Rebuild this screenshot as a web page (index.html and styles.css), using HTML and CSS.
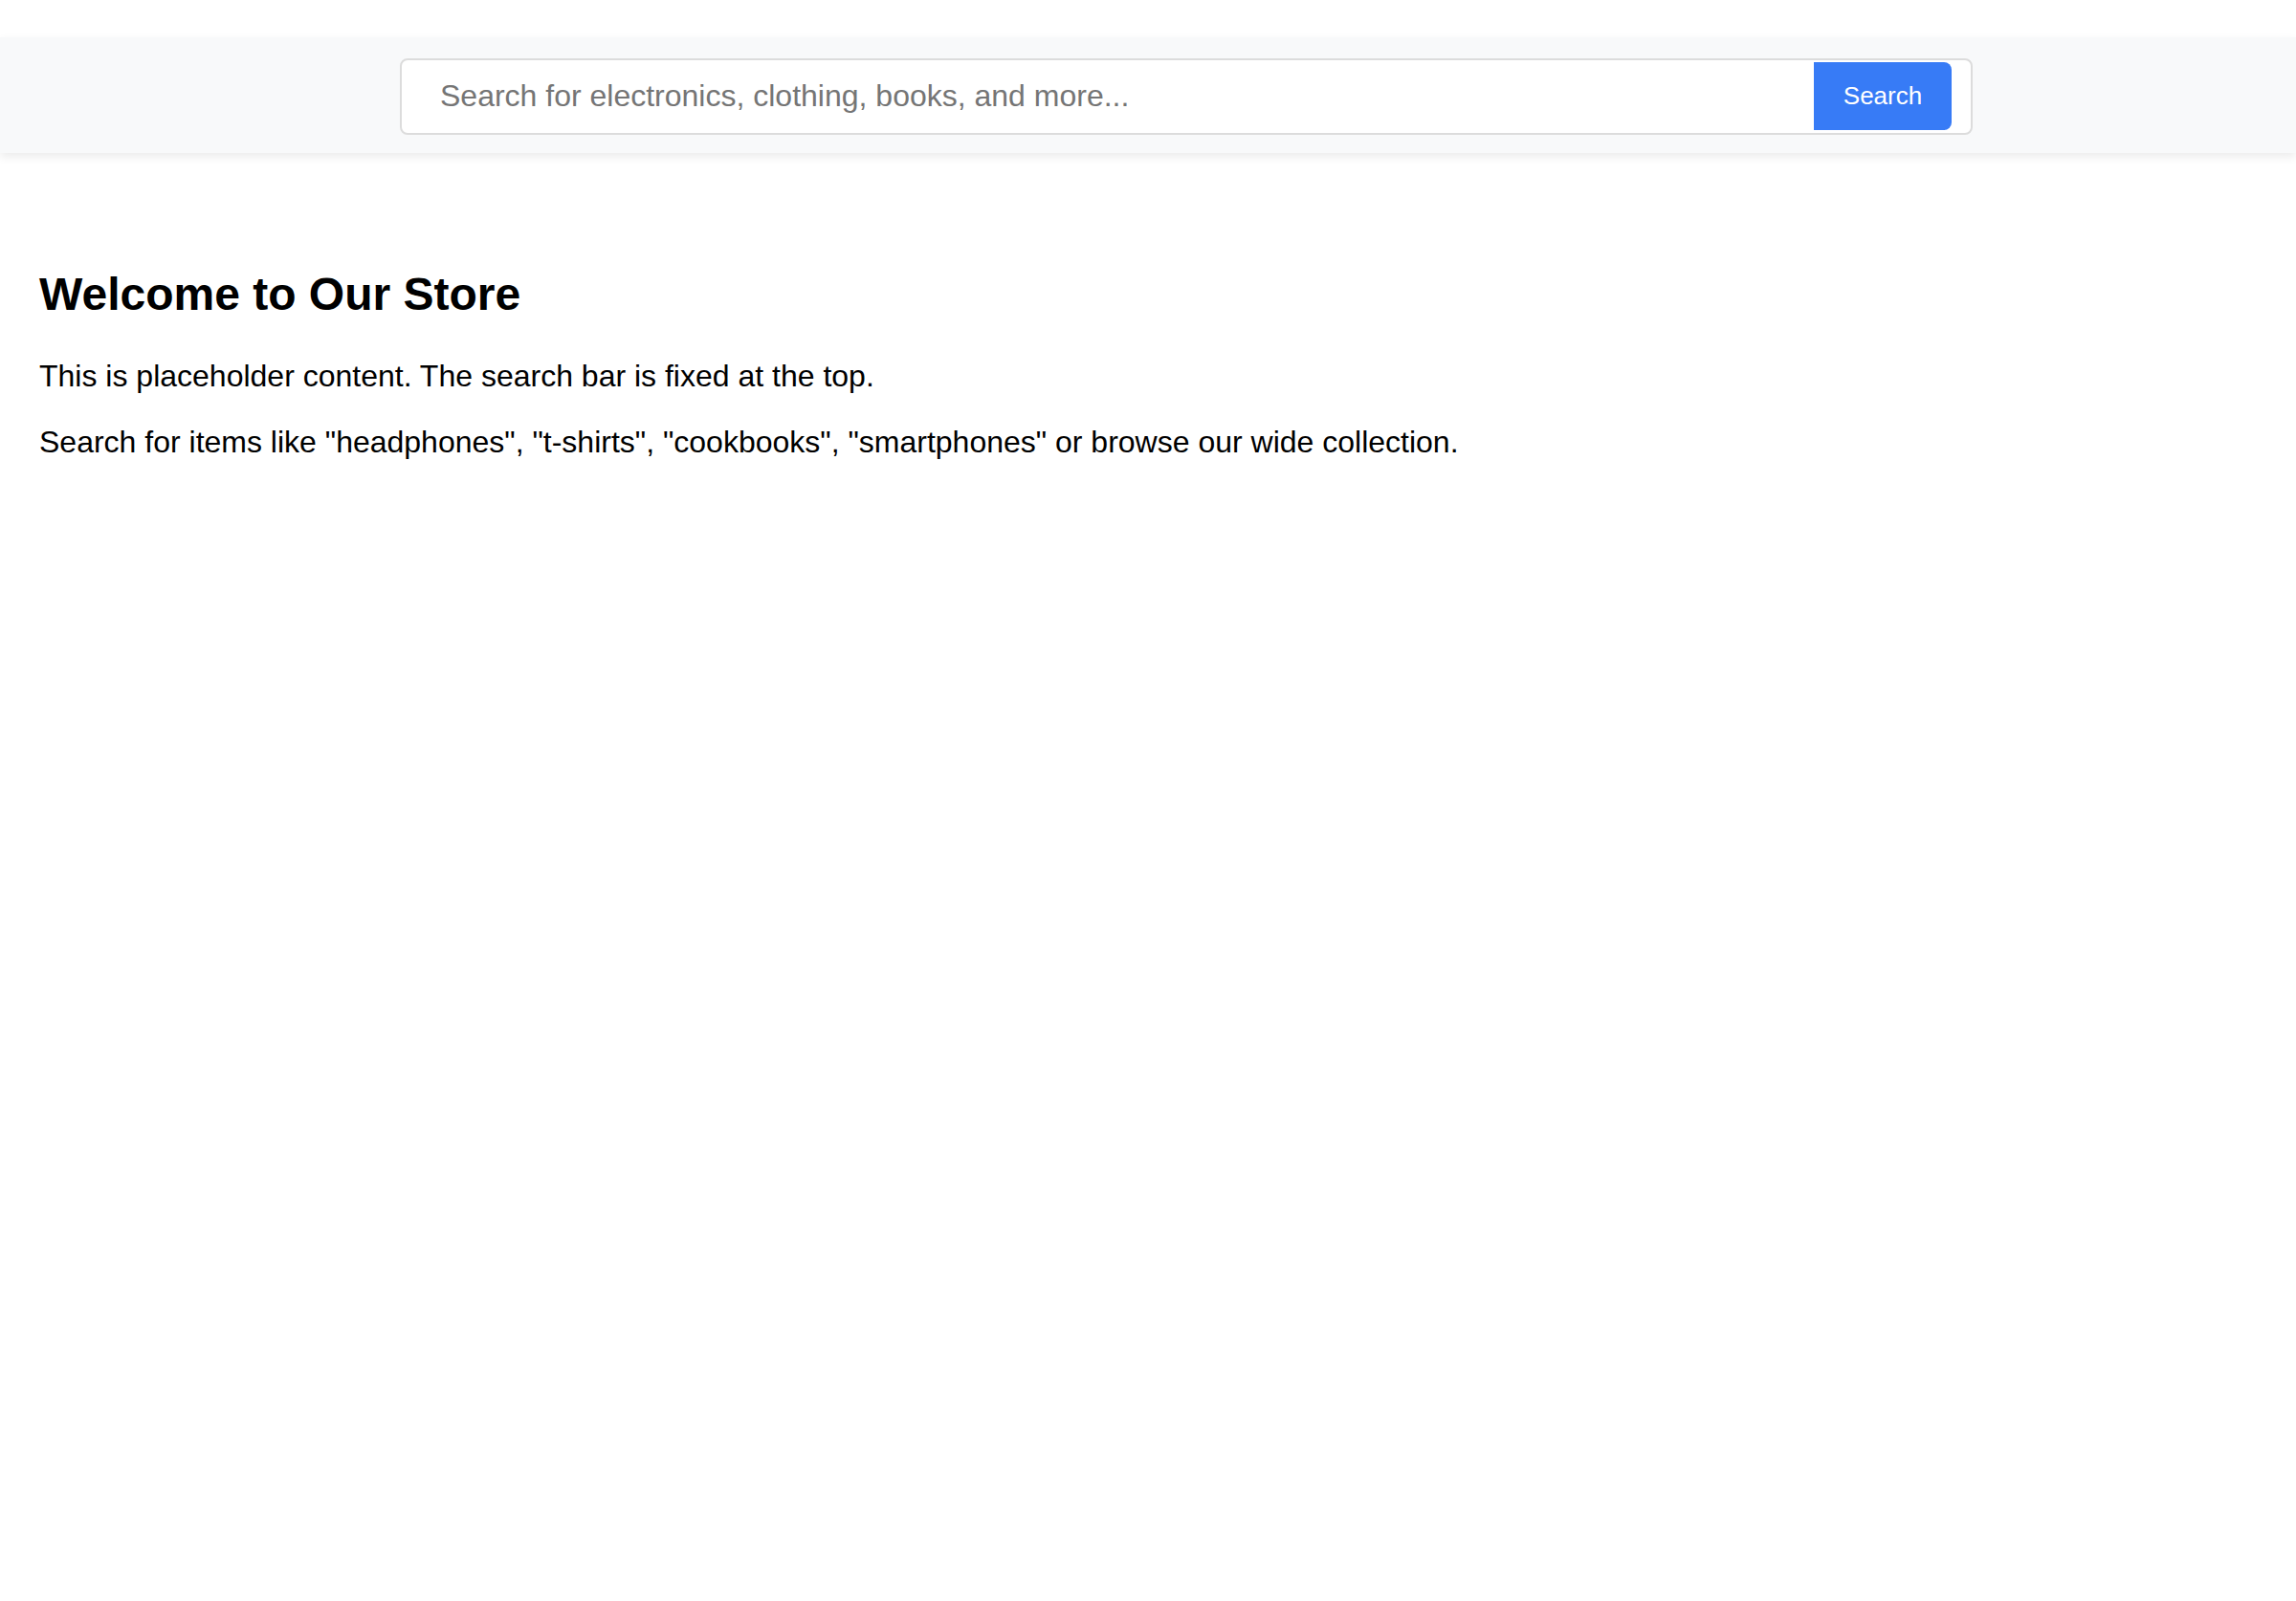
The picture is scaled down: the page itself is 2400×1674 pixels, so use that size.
FILE: index.html
```html
<!DOCTYPE html>
<html lang="en">
<head>
<meta charset="utf-8">
<title>Store</title>
<link rel="stylesheet" href="styles.css">
</head>
<body>
<header class="topbar">
  <form class="search-box" onsubmit="return false;">
    <input class="search-input" type="text" placeholder="Search for electronics, clothing, books, and more...">
    <button class="search-btn" type="submit">Search</button>
  </form>
</header>
<main class="content">
  <h1 class="title">Welcome to Our Store</h1>
  <p class="text">This is placeholder content. The search bar is fixed at the top.</p>
  <p class="text">Search for items like "headphones", "t-shirts", "cookbooks", "smartphones" or browse our wide collection.</p>
</main>
</body>
</html>
```

FILE: styles.css
```css
html, body {
  margin: 0;
  padding: 0;
  background: #ffffff;
}

body {
  font-family: "Liberation Sans", Arial, Helvetica, sans-serif;
  color: #000;
  padding-top: 39px;
}

.topbar {
  height: 121px;
  box-sizing: border-box;
  background: #f8f9fa;
  box-shadow: 0 4px 9px rgba(0, 0, 0, 0.08);
  display: flex;
  align-items: center;
  justify-content: center;
  padding-left: 80px;
  padding-top: 2px;
}

.search-box {
  width: 1644px;
  height: 80px;
  box-sizing: border-box;
  margin: 0;
  display: flex;
  align-items: center;
  background: #fff;
  border: 2px solid #dcdcdc;
  border-radius: 8px;
  padding: 0 20px 0 0;
}

.search-input {
  flex: 1;
  min-width: 0;
  height: 100%;
  border: none;
  outline: none;
  background: transparent;
  padding: 0 0 0 40px;
  font-family: "Liberation Sans", Arial, Helvetica, sans-serif;
  font-size: 32px;
  color: #000;
}

.search-input::placeholder {
  color: #757575;
}

.search-btn {
  width: 144px;
  height: 71px;
  border: none;
  border-radius: 0 8px 8px 0;
  background: #377bf6;
  color: #fff;
  font-family: "Liberation Sans", Arial, Helvetica, sans-serif;
  font-size: 26px;
  padding: 0;
  cursor: pointer;
}

.content {
  padding: 120px 41px 0;
}

.title {
  font-size: 48px;
  line-height: 56px;
  font-weight: bold;
  margin: 0 0 39px;
}

.text {
  font-size: 32px;
  line-height: 37.5px;
  margin: 0 0 31.5px;
}
```
